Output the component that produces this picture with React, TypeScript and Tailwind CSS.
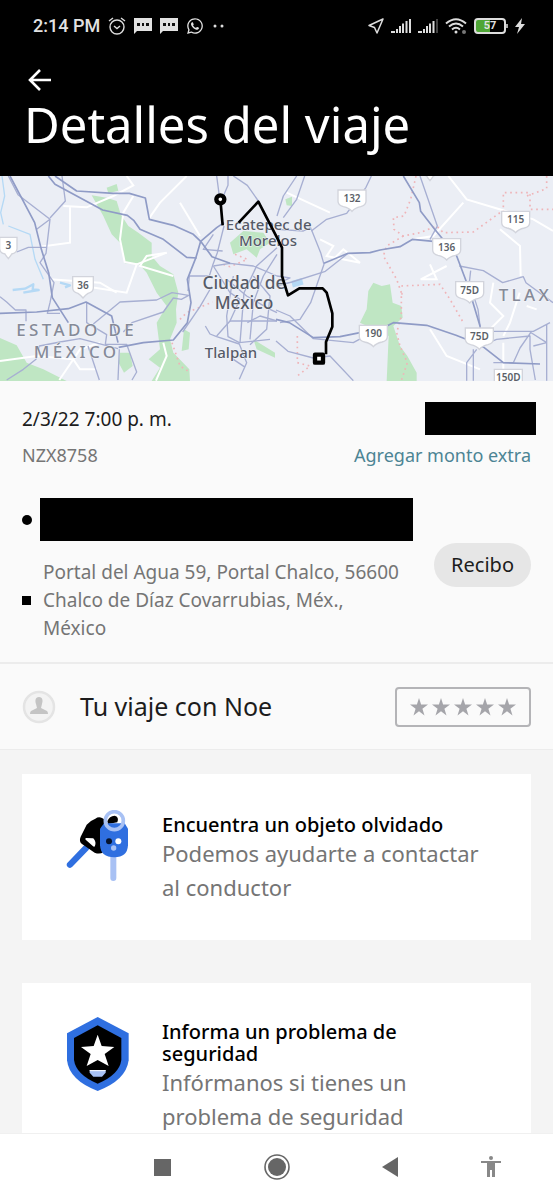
import { useState } from "react";
import { FaWhatsapp } from "react-icons/fa";

const shields = [
  { x: 25, y: 210, label: "3" },
  { x: 249, y: 328, label: "36" },
  { x: 1056, y: 68, label: "132" },
  { x: 1547, y: 132, label: "115" },
  { x: 1340, y: 214, label: "136" },
  { x: 1409, y: 343, label: "75D" },
  { x: 1120, y: 474, label: "190" },
  { x: 1438, y: 482, label: "75D" },
  { x: 1525, y: 606, label: "150D" },
  { x: 1290, y: -24, label: "" },
];

const mainRoads = [
  "M145 0L165 25L215 52L308 102L382 118L402 134L420 160L490 190L560 244L590 246",
  "M30 0L104 140L124 220L146 290L157 365L205 440",
  "M165 0L230 45L340 52L388 52L436 66L448 130L520 148L580 175L602 196L636 242L690 262",
  "M356 514L430 500L520 492L562 440L573 380L562 310L588 244L602 196L650 155L672 140",
  "M0 412L110 408L205 398L258 378L335 420L354 500",
  "M1210 0L1258 80L1262 106L1304 160L1370 240L1404 330L1440 450L1446 515",
  "M828 430L868 440L940 485L1020 482L1080 470L1120 470L1180 440L1280 448L1368 478L1444 508L1510 560L1620 564",
  "M972 262L1044 232L1110 230L1140 222L1200 212L1238 190L1300 196",
];

const roads = [
  "M25 0L54 56L150 130L110 160M150 130L138 232L120 260L162 320L150 380L142 412H180",
  "M186 0L196 75L150 126M0 362L20 378L46 402H78V436",
  "M280 444L360 378L470 372L516 350L566 358L544 370L520 366L490 408L396 440L370 468",
  "M50 228L85 214L140 214M20 612L70 580L108 550L118 510L180 498L240 488L354 518",
  "M260 378V440L320 476L316 505H380L410 588L396 612M264 510L298 612M358 520L354 612",
  "M650 0L658 60M684 0V28L670 60M700 0L742 28L775 75L830 180",
  "M672 150L652 230L638 268L628 300H600L568 300L564 345M640 175L610 220L668 225",
  "M640 270L690 262L760 270L831 300L870 306L828 325M640 270L690 350L720 370L690 435L650 480",
  "M636 330L600 392L548 468M700 300L680 420L684 482L718 500L810 490",
  "M831 215L770 270L732 350L720 500M831 235L790 300L760 380L750 490",
  "M680 310L740 360L810 400L831 410M690 435H831M760 300L810 360L800 460L750 506",
  "M616 450L630 474L650 482L718 504L740 560L718 610M700 550L736 574M831 435L780 420L742 440",
  "M831 120L850 60L890 0M850 125L890 70L914 0M831 160L910 165L932 155L962 230L972 265L932 380L900 430L840 440",
  "M828 330L876 318L976 286L1044 232M934 165L980 130L1040 112L1098 34L1114 0",
  "M828 402L870 420L940 488L1060 500L1100 478M828 495L864 526L940 546L990 540L1060 614",
  "M1260 0L1312 150L1290 190M1378 270L1450 284L1508 320L1570 302L1578 320L1659 380",
  "M1412 284L1408 320L1434 400L1440 450M1436 466H1600L1650 440",
  "M1440 510L1490 490L1590 480V520L1606 612M1592 470L1560 516L1540 560H1480",
  "M1400 614V560L1430 520M1420 614V520M1640 445V614M1590 468L1640 500L1600 510",
];

const minorRoads = [
  "M380 0L400 28L340 60L260 94L190 90M210 90V200L120 212M400 60L370 110L360 190L374 258L410 265L500 230",
  "M410 265L380 350L250 330M500 230L440 240L420 270L520 300M0 555L110 540L220 550L240 580L290 580",
  "M560 0L480 80L445 130M540 80L600 180M490 500L500 540L468 614",
  "M150 310L300 320L350 350M178 612L240 520L300 500",
  "M1345 0L1400 70L1600 130L1659 165M1390 80L1300 180L1238 190M1500 160L1560 210L1562 300",
  "M1480 320L1470 380L1510 420L1460 470M1559 350L1530 440L1510 480",
  "M960 190L1000 210L980 240L1080 260L1030 220L1000 250M860 50L990 110M1290 460L1340 540L1440 580",
  "M1290 265L1310 310L1262 310L1340 270M1510 500V590M1580 390L1610 400",
];

const borders = [
  "M705 235L742 250L690 272L660 262M540 430L560 410L638 378M516 500L540 570L564 585",
  "M1248 0L1232 70L1212 120L1180 125L1182 160L1210 180L1260 170L1310 150L1330 170L1420 168L1500 110H1510V50H1590V100H1659M1640 0V38L1580 60",
  "M1210 180L1160 210L1150 240L1190 310L1204 350L1204 420L1190 470L1200 510L1222 560L1204 614",
  "M1204 330L1320 325L1350 370L1390 440M1204 355L1210 350M892 480V560L930 570L892 600",
];

const cards = [
  {
    icon: <KeysIcon />,
    title: "Encuentra un objeto olvidado",
    text: "Podemos ayudarte a contactar al conductor",
    className: "pt-10 pb-9",
  },
  {
    icon: <ShieldIcon />,
    title: "Informa un problema de seguridad",
    text: "Infórmanos si tienes un problema de seguridad",
    className: "pt-[38px]",
  },
];

function SignalIcon({ weak = false }) {
  return (
    <svg className="h-4 w-5" viewBox="0 0 20 16" fill="#ddd">
      <path d="M0 13h4v2H0zM5 11h2v4H5zM8 8h2v7H8zM11 5.5h2v9.500h-2zM14.500 3h2v12h-2z" />
      <path d="M18 1h2v14h-2z" fill={weak ? "#444" : "#ddd"} />
    </svg>
  );
}

function MessageIcon() {
  return (
    <svg className="h-4 w-[18px]" viewBox="0 0 18 16">
      <path d="M0 0H18V13H3L0 16Z" fill="#e2e2e2" />
      <path d="M3 5h3v3H3zM8 5h2v3H8zM12 5h3v3h-3z" fill="#111" />
    </svg>
  );
}

function StatusBar() {
  return (
    <div className="flex h-[52px] items-center justify-between pr-7 pl-[33px] font-['Roboto',sans-serif] text-[#e2e2e2]">
      <div className="flex items-center gap-2">
        <span className="text-lg font-medium">2:14 PM</span>
        <svg className="h-5 w-[18px]" viewBox="0 0 18 20" fill="none" stroke="#ddd" strokeWidth="1.4">
          <circle cx="9" cy="11" r="7" />
          <path d="M6 10L9 12.5L12 10M1 5L5 2M17 5L13 2" />
        </svg>
        <MessageIcon />
        <MessageIcon />
        <FaWhatsapp className="size-[18px]" />
        <svg className="h-1 w-4" viewBox="0 0 16 4" fill="#ddd">
          <circle cx="3" cy="2" r="1.5" />
          <circle cx="10" cy="2" r="1.5" />
        </svg>
      </div>
      <div className="flex items-center gap-[7px]">
        <svg className="size-4" viewBox="0 0 16 16" fill="none" stroke="#ddd" strokeWidth="1.5" strokeLinejoin="round">
          <path d="M15 1L1 7.5L6.5 9.5L9 15Z" />
        </svg>
        <SignalIcon />
        <SignalIcon weak />
        <svg className="h-4 w-[22px]" viewBox="0 0 22 16" fill="none" stroke="#ddd" strokeWidth="2">
          <path d="M1 5.5Q11 -3 21 5.5M4 8.5Q11 2.5 18 8.5M7 11.5Q11 8 15 11.5" />
          <circle cx="11" cy="14" r="1.5" fill="#ddd" stroke="none" />
          <circle cx="19" cy="14" r="2" fill="#777" stroke="none" />
        </svg>
        <div className="flex items-center">
          <div className="flex h-4 w-8 items-center justify-center rounded border-2 border-[#ddd] bg-linear-to-r from-[#4fa636] from-50% to-black to-50% text-[11px] font-bold">
            57
          </div>
          <div className="h-1 w-0.5 bg-[#aaa]" />
        </div>
        <svg className="h-4 w-2.5" viewBox="0 0 10 16" fill="#ddd">
          <path d="M7 0L0 9H4L2 16L10 6H6Z" />
        </svg>
      </div>
    </div>
  );
}

function RouteMap() {
  return (
    <svg className="block h-[205px] w-full bg-[#ebeef5]" viewBox="0 0 1659 615" preserveAspectRatio="xMidYMid slice">
      <g fill="#bfe6c3">
        <path d="M275 58L320 65L350 75L362 115L385 150L415 170L455 200V240L480 270L520 295L535 350L528 400L530 440L510 490L520 530L568 580L570 615H455L480 575L446 550L480 520L470 440L500 390L470 350L440 290L415 262H375L360 200L335 175L310 120Z" />
        <path d="M320 35L350 24L355 44L325 52ZM0 486L50 508L80 560L130 580L200 615H0ZM360 530L390 530L398 570L372 590L356 560ZM552 460L570 470L566 520L545 525Z" />
        <path d="M690 200L730 165L790 170L810 200L780 220L770 245L740 220L700 235ZM760 490L825 530V545L770 520Z" />
        <path d="M1120 320L1145 330L1170 325L1178 380L1204 390L1208 425L1180 450L1200 510L1222 540L1250 590V615H1160L1166 480L1080 440L1100 400L1105 345Z" />
        <path d="M856 70L876 62V90L860 88Z" />
      </g>
      <g fill="none" stroke="#b5d9f5" strokeWidth="7" strokeLinejoin="round">
        <path d="M6 0L14 60L2 110L10 145M25 150L90 175L105 250L130 310" strokeWidth="4" />
        <path d="M38 342L75 338L100 325L98 340L116 342L70 350M180 320L210 328L195 334" />
        <path d="M876 325L908 316" strokeWidth="20" />
      </g>
      <g fill="none" stroke="#ffffff" strokeWidth="6">
        {minorRoads.map((d) => (
          <path key={d} d={d} />
        ))}
      </g>
      <g fill="none" stroke="#efb4b8" strokeWidth="5" strokeDasharray="5 11">
        {borders.map((d) => (
          <path key={d} d={d} />
        ))}
      </g>
      <g fill="none" stroke="#a7afd2" strokeWidth="4" strokeLinejoin="round">
        {roads.map((d) => (
          <path key={d} d={d} />
        ))}
      </g>
      <g fill="none" stroke="#8f9bc6" strokeWidth="5" strokeLinejoin="round">
        {mainRoads.map((d) => (
          <path key={d} d={d} />
        ))}
      </g>
      <g className="font-['Noto_Sans',sans-serif] font-medium" textAnchor="middle" stroke="#f4f6fa" strokeWidth="3" paintOrder="stroke">
        <g fill="#565b68" fontSize="45">
          <text x="806" y="161">Ecatepec de</text>
          <text x="804" y="210">Morelos</text>
          <text x="693" y="547">Tlalpan</text>
        </g>
        <g fill="#565b68" fontSize="52">
          <text x="732" y="340">Ciudad de</text>
          <text x="732" y="398">México</text>
        </g>
        <g className="tracking-[0.2em]" fill="#858a98" fontSize="51">
          <text x="230" y="481">ESTADO DE</text>
          <text x="230" y="545">MÉXICO</text>
          <text x="1496" y="374" textAnchor="start">TLAX</text>
        </g>
      </g>
      <g fill="none" stroke="#000" strokeWidth="8" strokeLinejoin="round">
        <path d="M661 70L668 148M716 140L775 77L831 185L846 215V300L864 358L898 337H968L980 350L997 412V452L978 498V535" />
        <circle cx="661" cy="70" r="12" fill="#fff" strokeWidth="13" />
        <rect x="945" y="536" width="24" height="24" fill="#fff" strokeWidth="13" />
      </g>
      {shields.map(({ x, y, label }) => {
        const w = label.length > 2 ? 42 : label.length > 1 ? 31 : 26;
        return (
          <g key={`${x}-${y}`} className="font-['Noto_Sans',sans-serif] font-semibold" transform={`translate(${x} ${y})`}>
            <path
              d={`M${-w} -26H${w}V8Q${w} 20 ${w - 16} 24Q8 28 0 38Q-8 28 ${16 - w} 24Q${-w} 20 ${-w} 8Z`}
              fill="#fff"
              stroke="#d2d4dc"
              strokeWidth="4"
            />
            <text y="10" textAnchor="middle" fill="#5b5f68" fontSize="30">
              {label}
            </text>
          </g>
        );
      })}
    </svg>
  );
}

function KeysIcon() {
  return (
    <svg className="h-[72px] w-16 shrink-0" viewBox="80 56 192 216">
      <path d="M140 170L92 220" stroke="#2f6fe0" strokeWidth="19" strokeLinecap="round" />
      <path d="M222 190V260" stroke="#a8c1f4" strokeWidth="18" strokeLinecap="round" />
      <path d="M168 82Q178 75 188 80L215 96L192 182Q182 190 166 184L128 158Q118 150 124 136L142 100Q152 88 168 82Z" fill="#000" />
      <path d="M141 143L161 144Q168 152 164 163Z" fill="#fff" stroke="#fff" strokeWidth="6" strokeLinejoin="round" />
      <circle cx="225" cy="88" r="26" fill="#fff" />
      <path d="M204 90Q210 74 226 73Q240 76 234 93L206 98Z" fill="#000" />
      <path d="M194 96H256L266 112V162Q264 198 225 198Q184 198 182 162V112Z" fill="#2f6fe0" />
      <circle cx="225" cy="88" r="27" fill="none" stroke="#a8c1f4" strokeWidth="11" />
      <circle cx="209" cy="150" r="9" fill="#06142e" />
      <circle cx="237" cy="150" r="9" fill="#fff" />
      <circle cx="223" cy="170" r="8" fill="#a8c1f4" />
    </svg>
  );
}

function ShieldIcon() {
  return (
    <svg className="h-[74px] w-16 shrink-0" viewBox="82 55 192 222">
      <path d="M177 55L270 104V185Q262 245 177 277Q92 245 85 185V104Z" fill="#2f6fe0" />
      <path d="M177 80L248 118V184Q242 228 177 255Q112 228 106 184V118Z" fill="#000" />
      <path d="M177 108L189 142L227 145L198 166L210 202L177 184L144 202L156 166L127 145L165 142Z" fill="#fff" />
      <path d="M153 214H201V222L190 234H164L153 222Z" fill="#a8c1f4" />
      <path d="M153 216H201" stroke="#fff" strokeWidth="3" />
    </svg>
  );
}

function Rating() {
  const [rating, setRating] = useState(0);

  return (
    <div className="flex h-10 items-center gap-1 rounded-sm border-2 border-[#b4b4b7] px-[13px]">
      {[1, 2, 3, 4, 5].map((star) => (
        <button
          key={star}
          type="button"
          aria-label={`${star} estrellas`}
          onClick={() => setRating(star)}
          className={star <= rating ? "text-black" : "text-[#a5a5aa]"}
        >
          <svg className="size-[18px]" viewBox="0 0 18 18" fill="currentColor">
            <path d="M9 0L11.1 6.6H18L12.4 10.7L14.5 17.4L9 13.3L3.5 17.4L5.6 10.7L0 6.6H6.9Z" />
          </svg>
        </button>
      ))}
    </div>
  );
}

function NavBar() {
  return (
    <nav className="grid h-[67px] grid-cols-[105fr_114fr_115fr_112fr_90fr_17fr] items-center border-t border-[#f0f0f0] bg-white text-[#666]">
      <button type="button" aria-label="Recientes" className="col-start-2 flex justify-center">
        <svg className="size-[17px]" viewBox="0 0 17 17" fill="currentColor">
          <path d="M0 0h17v17H0z" />
        </svg>
      </button>
      <button type="button" aria-label="Inicio" className="flex justify-center">
        <svg className="size-[26px]" viewBox="0 0 26 26">
          <circle cx="13" cy="13" r="12" fill="none" stroke="currentColor" strokeWidth="1.6" />
          <circle cx="13" cy="13" r="9" fill="currentColor" />
        </svg>
      </button>
      <button type="button" aria-label="Atrás" className="flex justify-center">
        <svg className="h-5 w-4" viewBox="0 0 16 20" fill="currentColor">
          <path d="M16 0V20L0 10Z" />
        </svg>
      </button>
      <button type="button" aria-label="Accesibilidad" className="flex justify-center text-[#888]">
        <svg className="h-[22px] w-5" viewBox="0 0 20 22" fill="currentColor">
          <circle cx="10" cy="2" r="2" />
          <path d="M0 5H20V7H14V21H11V14H9V21H6V7H0Z" />
        </svg>
      </button>
    </nav>
  );
}

export default function App() {
  return (
    <div className="flex min-h-screen flex-col bg-[#f4f4f4] font-['Noto_Sans',sans-serif] text-[#1c1c1c]">
      <header className="bg-black pb-5 text-white">
        <StatusBar />
        <div className="px-6 pt-4">
          <button type="button" aria-label="Volver" className="block px-1">
            <svg className="size-6" viewBox="0 0 24 24" fill="none" stroke="currentColor" strokeWidth="2.6">
              <path d="M12 2L2 12L12 22M2 12H23" />
            </svg>
          </button>
          <h1 className="text-[49px] leading-[64px]">Detalles del viaje</h1>
        </div>
      </header>

      <RouteMap />

      <main className="flex-1">
        <section className="border-b-2 border-[#ececec] bg-[#fafafa] px-[22px] py-5">
          <div className="flex justify-between">
            <div>
              <p className="text-[19px] leading-9">2/3/22 7:00 p. m.</p>
              <p className="text-lg leading-9 text-[#757575]">NZX8758</p>
            </div>
            <div className="flex flex-col items-end">
              <div className="mt-px mb-0.5 -mr-[5px] h-[33px] w-[111px] bg-black" />
              <a href="#" className="text-lg leading-9 text-[#4c8494]">
                Agregar monto extra
              </a>
            </div>
          </div>
          <div className="mt-[25px] flex items-center justify-between">
            <div>
              <div className="flex items-center gap-2">
                <div className="size-2.5 rounded-full bg-black" />
                <div className="h-[43px] w-[373px] bg-black" />
              </div>
              <div className="mt-[17px] flex items-center gap-3">
                <div className="size-[9px] shrink-0 bg-black" />
                <p className="w-[362px] text-[19px] leading-7 text-[#757575]">
                  Portal del Agua 59, Portal Chalco, 56600 Chalco de Díaz Covarrubias, Méx., México
                </p>
              </div>
            </div>
            <button type="button" className="mb-2.5 h-11 shrink-0 rounded-full bg-[#e6e6e6] px-[17px] text-xl">
              Recibo
            </button>
          </div>
        </section>

        <section className="flex h-[86px] items-center border-b border-[#ececec] bg-[#fafafa] px-[22px]">
          <svg className="size-[34px]" viewBox="0 0 34 34">
            <circle cx="17" cy="17" r="15" fill="#f3f3f3" stroke="#e4e4e4" strokeWidth="2.5" />
            <path d="M17 7C21 7 21 11 20 14L19 18L25 21Q26 22 26 24H8Q8 22 9 21L15 18L14 14C13 11 13 7 17 7Z" fill="#c4c4c4" />
          </svg>
          <h2 className="ml-6 flex-1 text-[25px]">Tu viaje con Noe</h2>
          <Rating />
        </section>

        <section className="flex flex-col gap-[43px] px-[22px] pt-6">
          {cards.map(({ icon, title, text, className }) => (
            <a key={title} href="#" className={`flex gap-8 bg-white pr-10 pl-11 ${className}`}>
              <div className="-mt-1">{icon}</div>
              <div>
                <h3 className="text-xl leading-[22px] font-medium text-black">{title}</h3>
                <p className="text-[22px] leading-[34px] text-[#757575]">{text}</p>
              </div>
            </a>
          ))}
        </section>
      </main>

      <NavBar />
    </div>
  );
}
